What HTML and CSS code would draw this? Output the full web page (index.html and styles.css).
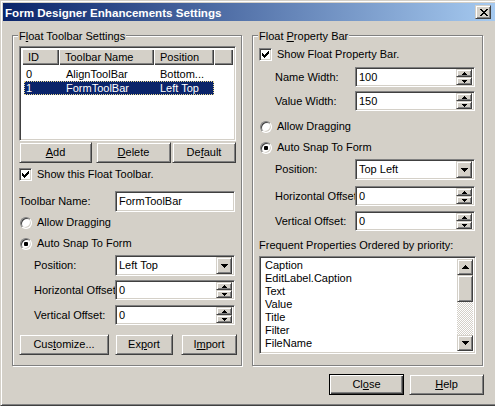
FILE: index.html
```html
<!DOCTYPE html>
<html>
<head>
<meta charset="utf-8">
<link rel="stylesheet" href="styles.css">
</head>
<body>
<div class="window">
  <div class="titlebar">
    <span class="title">Form Designer Enhancements Settings</span>
    <div class="close-btn raised">
      <svg width="8" height="7" viewBox="0 0 8 7"><path d="M0 0h2v1h-2zM6 0h2v1h-2zM1 1h2v1h-2zM5 1h2v1h-2zM2 2h4v1h-4zM3 3h2v1h-2zM2 4h4v1h-4zM1 5h2v1h-2zM5 5h2v1h-2zM0 6h2v1h-2zM6 6h2v1h-2z" fill="#000"/></svg>
    </div>
  </div>
  <div class="content">
    <div class="groups">
      <div class="group group-left">
        <span class="legend">F<u>l</u>oat Toolbar Settings</span>
        <div class="listview sunken">
          <div class="lv-header">
            <div class="hcell c-id">ID</div>
            <div class="hcell c-name">Toolbar Name</div>
            <div class="hcell c-pos">Position</div>
            <div class="hcell c-fill"></div>
          </div>
          <div class="lv-rows">
            <div class="lv-row">
              <span class="rc cell-id">0</span><span class="rc cell-name">AlignToolBar</span><span class="rc cell-pos">Bottom...</span>
            </div>
            <div class="lv-row selected">
              <span class="rc cell-id">1</span><span class="rc cell-name">FormToolBar</span><span class="rc cell-pos">Left Top</span>
            </div>
          </div>
        </div>
        <div class="btn-row top-btns">
          <div class="btn raised b-add"><u>A</u>dd</div>
          <div class="btn raised b-del"><u>D</u>elete</div>
          <div class="btn raised b-def">De<u>f</u>ault</div>
        </div>
        <div class="check-row l-show">
          <div class="checkbox sunken">
            <svg width="7" height="7" viewBox="0 0 7 7"><path d="M6 0h1v1h-1zM5 1h2v1h-2zM0 2h1v1h-1zM4 2h3v1h-3zM0 3h2v1h-2zM3 3h3v1h-3zM0 4h5v1h-5zM1 5h3v1h-3zM2 6h1v1h-1z" fill="#000"/></svg>
          </div>
          <span class="opt-text">Show this Float Toolbar.</span>
        </div>
        <div class="field-row l-name">
          <span class="lbl">Toolbar Name:</span>
          <div class="textbox sunken ctl-left">FormToolBar</div>
        </div>
        <div class="radio-row l-drag">
          <div class="radio"></div>
          <span class="opt-text">Allow Dragging</span>
        </div>
        <div class="radio-row l-snap">
          <div class="radio checked"><span class="dot"></span></div>
          <span class="opt-text">Auto Snap To Form</span>
        </div>
        <div class="field-row l-pos">
          <span class="lbl ind">Position:</span>
          <div class="combo sunken ctl-left">
            <span class="val">Left Top</span>
            <div class="drop raised"><svg width="7" height="4" viewBox="0 0 7 4"><path d="M0 0h7v1h-7zM1 1h5v1h-5zM2 2h3v1h-3zM3 3h1v1h-1z"/></svg></div>
          </div>
        </div>
        <div class="field-row l-horz">
          <span class="lbl ind">Horizontal Offset</span>
          <div class="spin sunken ctl-left">
            <span class="val">0</span>
            <div class="spin-btns">
              <div class="sb raised"><svg width="5" height="3" viewBox="0 0 5 3"><path d="M2 0h1v1h-1zM1 1h3v1h-3zM0 2h5v1h-5z"/></svg></div>
              <div class="sb raised"><svg width="5" height="3" viewBox="0 0 5 3"><path d="M0 0h5v1h-5zM1 1h3v1h-3zM2 2h1v1h-1z"/></svg></div>
            </div>
          </div>
        </div>
        <div class="field-row l-vert">
          <span class="lbl ind">Vertical Offset:</span>
          <div class="spin sunken ctl-left">
            <span class="val">0</span>
            <div class="spin-btns">
              <div class="sb raised"><svg width="5" height="3" viewBox="0 0 5 3"><path d="M2 0h1v1h-1zM1 1h3v1h-3zM0 2h5v1h-5z"/></svg></div>
              <div class="sb raised"><svg width="5" height="3" viewBox="0 0 5 3"><path d="M0 0h5v1h-5zM1 1h3v1h-3zM2 2h1v1h-1z"/></svg></div>
            </div>
          </div>
        </div>
        <div class="btn-row bottom-btns">
          <div class="btn raised b-cust">Cus<u>t</u>omize...</div>
          <div class="btn raised b-exp">Ex<u>p</u>ort</div>
          <div class="btn raised b-imp">I<u>m</u>port</div>
        </div>
      </div>

      <div class="group group-right">
        <span class="legend">Float <u>P</u>roperty Bar</span>
        <div class="check-row p-show">
          <div class="checkbox sunken">
            <svg width="7" height="7" viewBox="0 0 7 7"><path d="M6 0h1v1h-1zM5 1h2v1h-2zM0 2h1v1h-1zM4 2h3v1h-3zM0 3h2v1h-2zM3 3h3v1h-3zM0 4h5v1h-5zM1 5h3v1h-3zM2 6h1v1h-1z" fill="#000"/></svg>
          </div>
          <span class="opt-text">Show Float Property Bar.</span>
        </div>
        <div class="field-row p-nw">
          <span class="lbl ind">Name Width:</span>
          <div class="spin sunken ctl-right">
            <span class="val">100</span>
            <div class="spin-btns">
              <div class="sb raised"><svg width="5" height="3" viewBox="0 0 5 3"><path d="M2 0h1v1h-1zM1 1h3v1h-3zM0 2h5v1h-5z"/></svg></div>
              <div class="sb raised"><svg width="5" height="3" viewBox="0 0 5 3"><path d="M0 0h5v1h-5zM1 1h3v1h-3zM2 2h1v1h-1z"/></svg></div>
            </div>
          </div>
        </div>
        <div class="field-row p-vw">
          <span class="lbl ind">Value Width:</span>
          <div class="spin sunken ctl-right">
            <span class="val">150</span>
            <div class="spin-btns">
              <div class="sb raised"><svg width="5" height="3" viewBox="0 0 5 3"><path d="M2 0h1v1h-1zM1 1h3v1h-3zM0 2h5v1h-5z"/></svg></div>
              <div class="sb raised"><svg width="5" height="3" viewBox="0 0 5 3"><path d="M0 0h5v1h-5zM1 1h3v1h-3zM2 2h1v1h-1z"/></svg></div>
            </div>
          </div>
        </div>
        <div class="radio-row p-drag">
          <div class="radio"></div>
          <span class="opt-text">Allow Dragging</span>
        </div>
        <div class="radio-row p-snap">
          <div class="radio checked"><span class="dot"></span></div>
          <span class="opt-text">Auto Snap To Form</span>
        </div>
        <div class="field-row p-pos">
          <span class="lbl ind">Position:</span>
          <div class="combo sunken ctl-right">
            <span class="val">Top Left</span>
            <div class="drop raised"><svg width="7" height="4" viewBox="0 0 7 4"><path d="M0 0h7v1h-7zM1 1h5v1h-5zM2 2h3v1h-3zM3 3h1v1h-1z"/></svg></div>
          </div>
        </div>
        <div class="field-row p-horz">
          <span class="lbl ind">Horizontal Offset</span>
          <div class="spin sunken ctl-right">
            <span class="val">0</span>
            <div class="spin-btns">
              <div class="sb raised"><svg width="5" height="3" viewBox="0 0 5 3"><path d="M2 0h1v1h-1zM1 1h3v1h-3zM0 2h5v1h-5z"/></svg></div>
              <div class="sb raised"><svg width="5" height="3" viewBox="0 0 5 3"><path d="M0 0h5v1h-5zM1 1h3v1h-3zM2 2h1v1h-1z"/></svg></div>
            </div>
          </div>
        </div>
        <div class="field-row p-vert">
          <span class="lbl ind">Vertical Offset:</span>
          <div class="spin sunken ctl-right">
            <span class="val">0</span>
            <div class="spin-btns">
              <div class="sb raised"><svg width="5" height="3" viewBox="0 0 5 3"><path d="M2 0h1v1h-1zM1 1h3v1h-3zM0 2h5v1h-5z"/></svg></div>
              <div class="sb raised"><svg width="5" height="3" viewBox="0 0 5 3"><path d="M0 0h5v1h-5zM1 1h3v1h-3zM2 2h1v1h-1z"/></svg></div>
            </div>
          </div>
        </div>
        <div class="plain-label p-freq">Frequent Properties Ordered by priority:</div>
        <div class="listbox sunken">
          <div class="lb-items">
            <div class="lb-item">Caption</div>
            <div class="lb-item">EditLabel.Caption</div>
            <div class="lb-item">Text</div>
            <div class="lb-item">Value</div>
            <div class="lb-item">Title</div>
            <div class="lb-item">Filter</div>
            <div class="lb-item">FileName</div>
          </div>
          <div class="vscroll">
            <div class="sbtn raised"><svg width="7" height="4" viewBox="0 0 7 4"><path d="M3 0h1v1h-1zM2 1h3v1h-3zM1 2h5v1h-5zM0 3h7v1h-7z"/></svg></div>
            <div class="thumb raised"></div>
            <div class="track"></div>
            <div class="sbtn raised"><svg width="7" height="4" viewBox="0 0 7 4"><path d="M0 0h7v1h-7zM1 1h5v1h-5zM2 2h3v1h-3zM3 3h1v1h-1z"/></svg></div>
          </div>
        </div>
      </div>
    </div>
    <div class="dlg-buttons">
      <div class="btn default-btn b-close">Cl<u>o</u>se</div>
      <div class="btn raised b-help"><u>H</u>elp</div>
    </div>
  </div>
</div>
</body>
</html>
```
FILE: styles.css
```css
* { box-sizing: border-box; }
html, body { margin: 0; padding: 0; overflow: hidden; }
body {
  width: 495px; height: 406px;
  background: #d4d0c8;
  font-family: "Liberation Sans", Arial, sans-serif;
  font-size: 11px; line-height: 13px; color: #000;
}
u { text-decoration: underline; text-underline-offset: 1px; }

.window {
  width: 499px; height: 406px;
  border: 1px solid; border-color: #d4d0c8 #404040 #404040 #d4d0c8;
  box-shadow: inset 1px 1px #fff, inset -1px -1px #808080;
  padding: 2px;
  display: flex; flex-direction: column;
  background: #d4d0c8;
}

.raised {
  background: #d4d0c8;
  border: 1px solid; border-color: #d4d0c8 #404040 #404040 #d4d0c8;
  box-shadow: inset 1px 1px #fff, inset -1px -1px #808080;
}
.sunken {
  background: #fff;
  border: 1px solid; border-color: #808080 #fff #fff #808080;
  box-shadow: inset 1px 1px #404040, inset -1px -1px #d4d0c8;
}

.titlebar {
  height: 18px; flex: none;
  background: linear-gradient(to right, #0a246a, #a6caf0);
  display: flex; align-items: center;
  padding-left: 2px;
  color: #fff; font-weight: bold; font-size: 11.6px;
}
.close-btn {
  margin-left: auto; margin-right: 5px;
  width: 16px; height: 14px;
  display: flex; align-items: center; justify-content: center;
  padding-left: 1px;
}
.close-btn svg { display: block; }

.content { padding: 14px 0 0 9px; }
.groups { display: flex; }
.group {
  position: relative;
  height: 331px;
  border: 1px solid #808080;
  box-shadow: inset 1px 1px #fff, 1px 1px #fff;
  display: flex; flex-direction: column; align-items: flex-start;
}
.group > * { flex: none; }
.group-left { width: 230px; }
.group-right { width: 231px; margin-left: 10px; }
.legend {
  position: absolute; top: -6px; left: 5px;
  padding: 0 1px; background: #d4d0c8;
  white-space: nowrap;
}

/* list view */
.listview {
  margin: 10px 0 0 6px;
  width: 217px; height: 95px;
  padding: 2px;
  display: flex; flex-direction: column;
}
.lv-header { display: flex; height: 16px; flex: none; }
.hcell {
  height: 16px; padding-left: 6px;
  background: #d4d0c8;
  box-shadow: inset 1px 1px #fff, inset -1px -1px #404040, inset -2px -2px #808080;
  display: flex; align-items: center; white-space: nowrap;
}
.c-id { width: 37px; }
.c-name { width: 95px; }
.c-pos { width: 60px; }
.c-fill { flex: 1; }
.lv-rows { padding: 2px 0 0 2px; }
.lv-row {
  display: flex; height: 14px; width: 190px;
  align-items: center; white-space: nowrap;
  border: 1px solid transparent;
  line-height: 12px;
}
.lv-row.selected {
  background: #0a246a; color: #fff;
  border: 1px dotted #e8d890;
}
.rc { display: block; }
.cell-id { width: 34px; padding-left: 1px; }
.cell-name { width: 95px; padding-left: 7px; }
.cell-pos { flex: 1; padding-left: 6px; }

/* buttons */
.btn-row { display: flex; margin-left: 6px; }
.btn {
  height: 21px;
  display: flex; align-items: center; justify-content: center;
  white-space: nowrap;
}
.top-btns { margin-top: 1px; }
.b-add { width: 73px; }
.b-del { width: 75px; margin-left: 4px; }
.b-def { width: 64px; margin-left: 1px; }
.bottom-btns { margin-top: 9px; }
.b-cust { width: 90px; }
.b-exp { width: 58px; margin-left: 6px; }
.b-imp { width: 56px; margin-left: 8px; }

/* checkbox / radio */
.check-row, .radio-row {
  display: flex; align-items: center; height: 13px;
  white-space: nowrap;
}
.check-row { margin-left: 6px; }
.radio-row { margin-left: 7px; }
.checkbox {
  width: 13px; height: 13px; flex: none;
  display: flex; align-items: center; justify-content: center;
}
.checkbox svg { display: block; }
.radio {
  width: 12px; height: 12px; flex: none;
  border-radius: 50%;
  background: #fff;
  border: 1px solid; border-color: #808080 #fff #fff #808080;
  box-shadow: inset 1px 1px #404040, inset -1px -1px #d4d0c8;
  display: flex; align-items: center; justify-content: center;
}
.dot { width: 4px; height: 4px; border-radius: 1px; background: #000; }
.check-row .opt-text { margin-left: 5px; }
.radio-row .opt-text { margin-left: 5px; }

/* label + control rows */
.field-row {
  display: flex; align-items: center;
  margin-left: 6px;
}
.lbl { width: 96px; flex: none; white-space: nowrap; }
.group-left .lbl.ind { padding-left: 15px; }
.group-right .lbl.ind { padding-left: 16px; }
.ctl-left { width: 120px; }
.ctl-right { width: 120px; }
/* controls paint above a label that runs into them, as in the original */
.textbox, .combo, .spin { position: relative; }
.textbox { height: 21px; padding: 0 3px; display: flex; align-items: center; }
.combo {
  height: 21px; padding: 2px 2px 2px 3px;
  display: flex; align-items: center;
}
.combo .val { flex: 1; }
.drop {
  width: 16px; height: 17px;
  display: flex; align-items: center; justify-content: center;
}
.drop svg, .sb svg, .sbtn svg { display: block; }
.spin {
  height: 20px; padding: 2px 2px 2px 3px;
  display: flex; align-items: center;
}
.spin .val { flex: 1; }
.spin-btns { width: 16px; height: 16px; display: flex; flex-direction: column; }
.sb {
  flex: 1;
  display: flex; align-items: center; justify-content: center;
}

.plain-label { margin-left: 6px; white-space: nowrap; }

/* left vertical spacing */
.l-show { margin-top: 5px; }
.l-name { margin-top: 10px; }
.l-drag { margin-top: 4px; }
.l-snap { margin-top: 8px; }
.l-pos { margin-top: 5px; }
.l-horz { margin-top: 4px; }
.l-vert { margin-top: 5px; }

/* right vertical spacing */
.p-show { margin-top: 12px; }
.p-nw { margin-top: 6px; }
.p-vw { margin-top: 4px; }
.p-drag { margin-top: 9px; }
.p-snap { margin-top: 8px; }
.p-pos { margin-top: 5px; }
.p-horz { margin-top: 6px; }
.p-vert { margin-top: 5px; }
.p-freq { margin-top: 8px; }

/* list box */
.listbox {
  margin: 4px 0 0 6px;
  width: 217px; height: 98px;
  padding: 2px;
  display: flex;
}
.lb-items { flex: 1; padding-left: 3px; overflow: hidden; }
.lb-item { height: 13px; white-space: nowrap; }
.vscroll { width: 16px; display: flex; flex-direction: column; }
.sbtn {
  height: 16px; flex: none;
  display: flex; align-items: center; justify-content: center;
}
.thumb { height: 27px; flex: none; }
.track {
  flex: 1;
  background: repeating-conic-gradient(#fff 0 25%, #d4d0c8 0 50%) 0 0 / 2px 2px;
}

/* dialog buttons */
.dlg-buttons { display: flex; margin-top: 8px; padding-left: 317px; }
.b-close { width: 75px; }
.b-help { width: 75px; margin-left: 5px; }
.default-btn {
  background: #d4d0c8;
  border: 1px solid #000;
  box-shadow: inset 1px 1px #fff, inset -1px -1px #404040, inset -2px -2px #808080;
}
```
